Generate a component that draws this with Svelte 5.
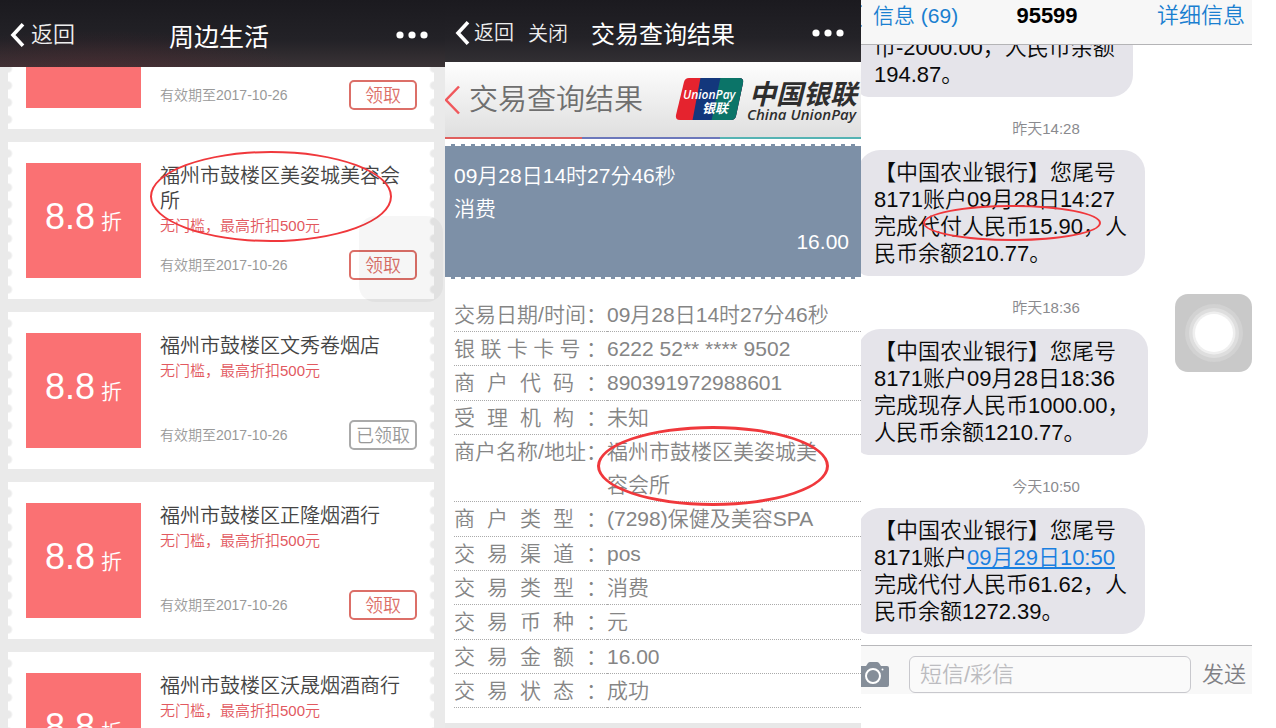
<script lang="ts">
  type Coupon = { name?: string; taken?: boolean; circled?: boolean };
  type Row = { label: string; value: string; circled?: boolean };

  // the first coupon is scrolled most of the way under the title bar
  const coupons: Coupon[] = [
    {},
    { name: '福州市鼓楼区美姿城美容会所', circled: true },
    { name: '福州市鼓楼区文秀卷烟店', taken: true },
    { name: '福州市鼓楼区正隆烟酒行' },
    { name: '福州市鼓楼区沃晟烟酒商行' },
  ];

  const rows: Row[] = [
    { label: '交易日期/时间', value: '09月28日14时27分46秒' },
    { label: '银联卡卡号', value: '6222 52** **** 9502' },
    { label: '商户代码', value: '890391972988601' },
    { label: '受理机构', value: '未知' },
    { label: '商户名称/地址', value: '福州市鼓楼区美姿城美容会所', circled: true },
    { label: '商户类型', value: '(7298)保健及美容SPA' },
    { label: '交易渠道', value: 'pos' },
    { label: '交易类型', value: '消费' },
    { label: '交易币种', value: '元' },
    { label: '交易金额', value: '16.00' },
    { label: '交易状态', value: '成功' },
  ];

  let draft = $state('');
</script>

<svelte:head>
  <title>周边生活</title>
</svelte:head>

{#snippet chevron()}
  <svg class="chevron" width="15" height="24" viewBox="0 0 15 24" aria-hidden="true">
    <path d="M13 1.200 3 12l10 10.800" fill="none" stroke="currentColor" stroke-width="3.600" />
  </svg>
{/snippet}

{#snippet dots()}
  <button class="more" aria-label="更多">
    <svg width="32" height="8" viewBox="0 0 32 8">
      <circle cx="4" cy="4" r="3.600" /><circle cx="16" cy="4" r="3.600" /><circle cx="28" cy="4" r="3.600" />
    </svg>
  </button>
{/snippet}

<main>
  <section class="coupons">
    <header class="bar glow">
      <button class="back">{@render chevron()}返回</button>
      <h1>周边生活</h1>
      {@render dots()}
    </header>
    <div class="list">
      {#each coupons as c}
        <article class="coupon">
          <div class="tile">
            {#if c.name}<b>8.8</b><span>折</span>{/if}
          </div>
          <div class="info">
            {#if c.name}
              <h2>{c.name}</h2>
              <p class="terms">无门槛，最高折扣500元</p>
            {/if}
            <div class="foot">
              <span>有效期至2017-10-26</span>
              <button class="take" class:taken={c.taken}>{c.taken ? '已领取' : '领取'}</button>
            </div>
          </div>
          {#if c.circled}
            <i class="ring ring-name"></i>
            <i class="ghost"></i>
          {/if}
        </article>
      {/each}
    </div>
  </section>

  <section class="query">
    <header class="bar low">
      <button class="back">{@render chevron()}返回</button>
      <button class="close">关闭</button>
      <h1>交易查询结果</h1>
      {@render dots()}
    </header>

    <div class="brand">
      <svg width="15" height="30" viewBox="0 0 15 30" aria-hidden="true">
        <path d="M14 1.500 1 15l13 13.500" fill="none" stroke="#f0585c" stroke-width="2.500" />
      </svg>
      <h2>交易查询结果</h2>
      <svg class="logo" width="186" height="50" viewBox="0 0 186 50" role="img" aria-label="China UnionPay 中国银联">
        <clipPath id="card"><path d="M14 3h50q5 0 4 5l-7 33q-1 4-5 4H5q-5 0-4-5L9 7q1-4 5-4z" /></clipPath>
        <g clip-path="url(#card)">
          <rect width="70" height="48" fill="#e5232e" />
          <path d="M26 0h48v48H17z" fill="#13377c" />
          <path d="M46 0h30v48H36z" fill="#0b7468" />
        </g>
        <g font-weight="bold" font-style="italic">
          <text class="latin" x="8" y="24" font-size="12" fill="#fff">UnionPay</text>
          <text x="27" y="38" font-size="13" fill="#fff">银联</text>
          <text x="74" y="29" font-size="27" fill="#2e2e2e">中国银联</text>
          <text class="latin" x="72" y="45" font-size="15" fill="#2e2e2e">China UnionPay</text>
        </g>
      </svg>
    </div>

    <div class="summary">
      <p>09月28日14时27分46秒</p>
      <p>消费</p>
      <p class="amount">16.00</p>
    </div>

    <div class="detail">
      <table>
        <tbody>
          {#each rows as r}
            <tr>
              <th scope="row">{r.label}：</th>
              <td>{r.value}{#if r.circled}<i class="ring ring-shop"></i>{/if}</td>
            </tr>
          {/each}
        </tbody>
      </table>
    </div>
  </section>

  <section class="sms">
    <div class="screen">
      <header class="nav">
        <a href="#list">
          <svg width="14" height="26" viewBox="0 0 14 26" aria-hidden="true">
            <path d="M12 2 2 13l10 11" fill="none" stroke="currentColor" stroke-width="3" />
          </svg>
          信息 (69)
        </a>
        <h1>95599</h1>
        <a class="more-link" href="#detail">详细信息</a>
      </header>

      <div class="thread">
        <p class="bubble">币-2000.00，人民币余额<br />194.87。</p>
        <time>昨天14:28</time>
        <p class="bubble">
          【中国农业银行】您尾号<br />8171账户09月28日14:27<br />完成代付人民币15.90，人<br />民币余额210.77。
          <i class="ring ring-paid"></i>
        </p>
        <time>昨天18:36</time>
        <p class="bubble">【中国农业银行】您尾号<br />8171账户09月28日18:36<br />完成现存人民币1000.00，<br />人民币余额1210.77。</p>
        <time>今天10:50</time>
        <p class="bubble">【中国农业银行】您尾号<br />8171账户<a href="#date">09月29日10:50</a><br />完成代付人民币61.62，人<br />民币余额1272.39。</p>
      </div>

      <form class="compose">
        <button type="button" class="camera" aria-label="相机">
          <svg width="32" height="26" viewBox="0 0 32 26">
            <path d="M2 4h7l2-3q1-1 2-1h7q1 0 2 1l2 3h6q2 0 2 2v17q0 2-2 2H2q-2 0-2-2V6q0-2 2-2z" fill="#858e99" />
            <circle cx="16" cy="14" r="7" fill="none" stroke="#fff" stroke-width="2" />
            <circle cx="25.500" cy="7.500" r="1" fill="#fff" />
          </svg>
        </button>
        <input type="text" aria-label="短信/彩信" placeholder="短信/彩信" bind:value={draft} />
        <button type="button" class="send">发送</button>
      </form>

      <button class="assist" aria-label="辅助触控">
        <svg width="77" height="78" viewBox="0 0 77 78">
          <circle cx="39" cy="39" r="29" fill="#d2d2d2" />
          <circle cx="39" cy="39" r="25" fill="#dedede" />
          <circle cx="39" cy="39" r="21.500" fill="#efefef" />
          <circle cx="39" cy="39" r="19" fill="#fff" />
        </svg>
      </button>
    </div>
  </section>
</main>

<style>
  :global(body) {
    background: #fff;
    font-family: "Liberation Sans", "Noto Sans CJK SC", sans-serif;
    font-weight: 350;
  }

  main {
    display: grid;
    grid-template-columns: 445fr 416fr 415fr;
    height: 100vh;
    overflow: hidden;
  }

  section {
    min-width: 0;
    overflow: hidden;
  }

  h1, h2, p { margin: 0; font-weight: inherit; }

  button {
    font: inherit;
    color: inherit;
    background: none;
    border: 0;
    padding: 0;
    cursor: pointer;
  }

  svg { display: block; }

  .ring {
    position: absolute;
    box-sizing: border-box;
    border: 2px solid #f0383c;
    border-radius: 50%;
    pointer-events: none;
  }

  /* dark title bars */
  .bar {
    position: relative;
    z-index: 1;
    display: flex;
    align-items: center;
    box-sizing: border-box;
    height: 67px;
    padding: 3px 17px 0 10px;
    background: linear-gradient(#1b1a1f, #232227 60%, #322f33);
    color: #fff;
  }
  .glow {
    display: grid;
    grid-template-columns: 1fr auto 1fr;
    background:
      radial-gradient(ellipse at 22% 110%, #5c242c66, transparent 42%),
      linear-gradient(#1b1a1f, #232227 60%, #3a3336);
  }
  .low { height: 62px; }
  .bar h1 { font-size: 25px; font-weight: 400; }
  .low h1 { font-size: 24px; margin-left: 23px; }
  .back {
    display: flex;
    align-items: center;
    gap: 6px;
    font-size: 22px;
    line-height: 28px;
    color: #eee;
  }
  .back .chevron { color: #fff; }
  .low .back, .close { font-size: 20px; }
  .low .back { gap: 4px; }
  .close { margin-left: 14px; color: #eee; }
  .more { margin-left: auto; fill: #fff; }

  /* coupon list */
  .coupons { background: #eaeaea; }
  .list {
    display: flex;
    flex-direction: column;
    gap: 13px;
    margin-top: -95px;
    padding: 0 11px 0 8px;
  }
  .coupon {
    position: relative;
    display: flex;
    flex-shrink: 0;
    gap: 19px;
    padding: 21px 17px 21px 18px;
    background:
      radial-gradient(circle at 0 50%, #eaeaea 3px, transparent 5px) 0 3px / 6px 17px repeat-y,
      radial-gradient(circle at 100% 50%, #eaeaea 3px, transparent 5px) 100% 3px / 6px 17px repeat-y,
      #fff;
  }
  .tile {
    flex: none;
    display: flex;
    align-items: baseline;
    justify-content: center;
    gap: 6px;
    width: 115px;
    height: 115px;
    line-height: 108px;
    background: #fa7173;
    color: #fff;
    font-size: 21px;
  }
  .tile b { font-size: 36px; font-weight: inherit; }
  .info {
    flex: 1;
    display: flex;
    flex-direction: column;
    min-width: 0;
    margin-bottom: -2px;
  }
  .info h2 {
    padding-top: 1px;
    font-size: 20px;
    line-height: 25px;
    color: #444;
  }
  .terms {
    font-size: 15px;
    line-height: 23px;
    color: #e2595f;
  }
  .foot {
    display: flex;
    align-items: center;
    justify-content: space-between;
    margin-top: auto;
    font-size: 14px;
    line-height: 20px;
    color: #999;
  }
  .take {
    box-sizing: border-box;
    width: 68px;
    height: 30px;
    border: 2px solid #dc6f68;
    border-radius: 5px;
    font-size: 18px;
    line-height: 28px;
    color: #dc6f68;
  }
  .taken { color: #999; border-color: #aaa; }
  .ring-name {
    left: 142px;
    top: 9px;
    width: 242px;
    height: 91px;
  }
  .ghost {
    position: absolute;
    right: -9px;
    bottom: -3px;
    width: 84px;
    height: 86px;
    border-radius: 16px;
    background: #00000009;
    pointer-events: none;
  }

  /* transaction result */
  .query {
    display: flex;
    flex-direction: column;
    background: #e8e8e8;
  }
  .brand {
    display: flex;
    align-items: center;
    flex: none;
    box-sizing: border-box;
    height: 77px;
    border-bottom: 2px solid;
    border-image: linear-gradient(90deg, #e0605e 33%, #6c78bb 33% 66%, #55b3b3 66%) 1;
    background: linear-gradient(#fefefe, #dfdfdf);
  }
  .brand h2 {
    margin-left: 9px;
    font-size: 29px;
    line-height: 40px;
    color: #6f6f6f;
    white-space: nowrap;
  }
  .logo { flex: none; margin-left: auto; }
  .logo .latin { font-family: "Open Sans", "Liberation Sans", sans-serif; font-weight: 600; }
  .summary {
    flex: none;
    padding: 13px 12px 19px 9px;
    border: dashed #fff;
    border-width: 2px 0;
    margin-top: 5px;
    background: #7d90a7;
    box-shadow: 0 -5px #fff;
    color: #fff;
    font-size: 21px;
    line-height: 33px;
  }
  .amount { text-align: right; }
  .detail {
    flex: none;
    padding: 19px 0 15px 9px;
    background: #fff;
  }
  table {
    width: 100%;
    border-spacing: 0;
    color: #858585;
    font-size: 21px;
    line-height: 33px;
  }
  th, td {
    padding: 0;
    border-bottom: 1px dotted #aaa;
    vertical-align: top;
    font-weight: inherit;
    text-align: left;
  }
  tr:nth-child(3n) > * { padding-bottom: 1px; }
  th {
    width: 153px;
    text-align-last: justify;
    white-space: nowrap;
  }
  td { position: relative; padding-right: 24px; }
  .ring-shop {
    left: -10px;
    top: -9px;
    width: 232px;
    height: 80px;
    border-width: 3px;
  }

  /* messages: the screen's left edge runs under the neighbouring panel */
  .sms { padding-right: 24px; }
  .screen {
    position: relative;
    margin-left: -21px;
  }
  .nav {
    position: relative;
    z-index: 1;
    display: grid;
    grid-template-columns: 1fr auto 1fr;
    align-items: center;
    box-sizing: border-box;
    height: 45px;
    padding: 3px 7px 15px 9px;
    border-bottom: 1px solid #b4b4b6;
    background: #f7f7f7;
    font-size: 21px;
    line-height: 26px;
  }
  .nav a {
    display: flex;
    align-items: center;
    gap: 10px;
    color: #1a7fd0;
    text-decoration: none;
  }
  .nav h1 { font-size: 22px; font-weight: 700; }
  .nav .more-link { justify-content: flex-end; font-size: 22px; }
  .thread {
    display: flex;
    flex-direction: column;
    align-items: flex-start;
    margin-top: -20px;
    padding: 0 0 11px 18px;
  }
  .bubble {
    position: relative;
    padding: 9px 18px 9px 16px;
    border-radius: 22px 22px 22px 10px;
    background: #e5e4ea;
    color: #0a0a0a;
    font-size: 22px;
    line-height: 27px;
    white-space: nowrap;
  }
  .bubble a { color: #1a7fe0; }
  time {
    align-self: center;
    padding: 22px 18px 11px 0;
    color: #8a8a8e;
    font-size: 15px;
    line-height: 20px;
  }
  .ring-paid {
    left: 65px;
    top: 55px;
    width: 178px;
    height: 36px;
  }
  .compose {
    display: flex;
    align-items: center;
    gap: 11px;
    padding: 10px 6px 1px 17px;
    border-top: 1px solid #b8b8bb;
    background: #f8f8f8;
  }
  .compose input {
    flex: 1;
    min-width: 0;
    box-sizing: border-box;
    height: 37px;
    margin-left: 9px;
    padding: 0 10px;
    border: 1px solid #c8c8cd;
    border-radius: 6px;
    background: #fafafa;
    font: inherit;
    font-size: 22px;
  }
  .compose input::placeholder { color: #bcbcc0; }
  .send {
    font-size: 22px;
    line-height: 26px;
    color: #808085;
  }
  .assist {
    position: absolute;
    right: 0;
    top: 294px;
    border-radius: 13px;
    background: #c9c9c9;
  }
</style>
